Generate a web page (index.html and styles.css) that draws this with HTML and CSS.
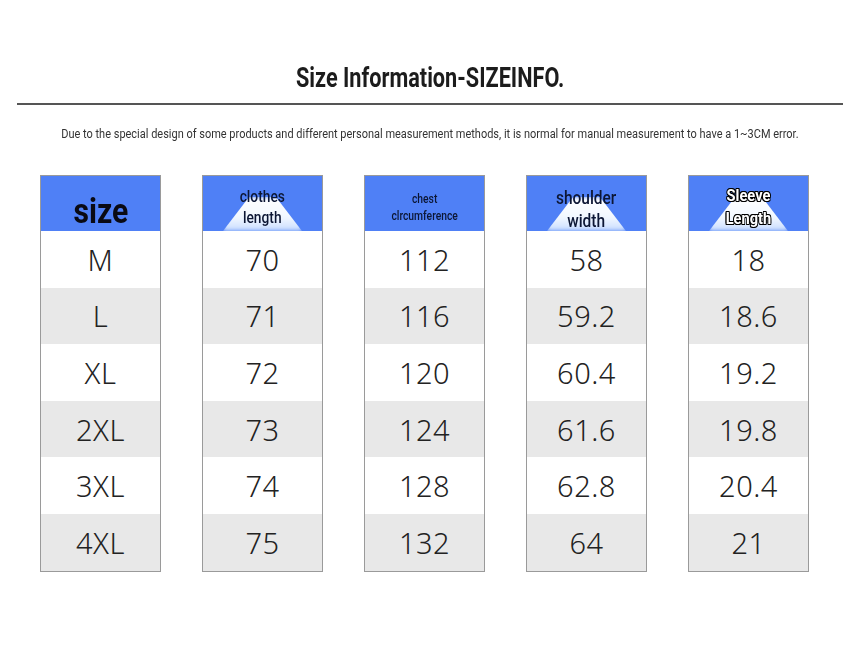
FILE: index.html
```html
<!DOCTYPE html>
<html>
<head>
<meta charset="utf-8">
<link rel="stylesheet" href="styles.css">
</head>
<body>
<div class="page">
  <h1 class="title"><span class="squeeze">Size Information-SIZEINFO.</span></h1>
  <div class="rule"></div>
  <p class="note"><span class="squeeze">Due to the special design of some products and different personal measurement methods, it is normal for manual measurement to have a 1~3CM error.</span></p>
  <div class="table">
    <div class="col">
      <div class="head head-size"><span>size</span></div>
      <div class="cell">M</div>
      <div class="cell alt">L</div>
      <div class="cell">XL</div>
      <div class="cell alt">2XL</div>
      <div class="cell">3XL</div>
      <div class="cell alt">4XL</div>
    </div>
    <div class="col">
      <div class="head glow head-clothes"><span>clothes<br>length</span></div>
      <div class="cell">70</div>
      <div class="cell alt">71</div>
      <div class="cell">72</div>
      <div class="cell alt">73</div>
      <div class="cell">74</div>
      <div class="cell alt">75</div>
    </div>
    <div class="col">
      <div class="head head-chest"><span>chest<br>clrcumference</span></div>
      <div class="cell">112</div>
      <div class="cell alt">116</div>
      <div class="cell">120</div>
      <div class="cell alt">124</div>
      <div class="cell">128</div>
      <div class="cell alt">132</div>
    </div>
    <div class="col">
      <div class="head glow head-shoulder"><span>shoulder<br>width</span></div>
      <div class="cell">58</div>
      <div class="cell alt">59.2</div>
      <div class="cell">60.4</div>
      <div class="cell alt">61.6</div>
      <div class="cell">62.8</div>
      <div class="cell alt">64</div>
    </div>
    <div class="col">
      <div class="head glow head-sleeve"><span>Sleeve<br>Length</span></div>
      <div class="cell">18</div>
      <div class="cell alt">18.6</div>
      <div class="cell">19.2</div>
      <div class="cell alt">19.8</div>
      <div class="cell">20.4</div>
      <div class="cell alt">21</div>
    </div>
  </div>
</div>
</body>
</html>
```
FILE: styles.css
```css
html, body {
  margin: 0;
  padding: 0;
  background: #ffffff;
}
.page {
  width: 860px;
  height: 645px;
  padding-top: 62px;
  box-sizing: border-box;
  font-family: "Roboto", "DejaVu Sans Condensed", sans-serif;
}
.squeeze {
  display: inline-block;
  white-space: nowrap;
}
.title {
  margin: 0;
  text-align: center;
  font-size: 27px;
  line-height: 32px;
  font-weight: bold;
  color: #1c1c1c;
}
.title .squeeze {
  transform: scaleX(0.803);
}
.rule {
  margin: 9px 17px 0 17px;
  height: 2px;
  background: #555555;
}
.note {
  margin: 21px 0 0 0;
  text-align: center;
  font-size: 12px;
  line-height: 16px;
  color: #333333;
}
.note .squeeze {
  transform: scaleX(0.915);
}
.table {
  display: flex;
  gap: 41px;
  padding-left: 40px;
  margin-top: 33px;
}
.col {
  width: 121px;
  box-sizing: border-box;
  border: 1px solid #9a9a9a;
  display: flex;
  flex-direction: column;
}
.head {
  position: relative;
  height: 55px;
  background: #4f80f6;
  display: flex;
  align-items: center;
  justify-content: center;
  text-align: center;
  overflow: hidden;
}
.head span {
  position: relative;
  z-index: 1;
  display: inline-block;
  transform: scaleX(0.86);
}
.head.glow::before {
  content: "";
  position: absolute;
  left: 20px;
  right: 20px;
  bottom: 0;
  height: 34px;
  background: linear-gradient(#ffffff, #f2f8ff 60%, #c8dcff);
  clip-path: polygon(33% 0, 67% 0, 100% 100%, 0 100%);
  filter: blur(2px);
}
.head-size {
  align-items: flex-end;
}
.head-size span {
  font-size: 35px;
  line-height: 38px;
  font-weight: bold;
  color: #0a0a14;
}
.head-clothes span {
  font-size: 16px;
  line-height: 21px;
  font-weight: 500;
  color: #0c1634;
  margin-top: 6px;
}
.head-chest span {
  font-size: 12px;
  line-height: 17px;
  font-weight: 500;
  color: #0c1634;
  margin-top: 8px;
}
.head-shoulder span {
  font-size: 18px;
  line-height: 23px;
  font-weight: 500;
  color: #0c1634;
  margin-top: 11px;
}
.head-sleeve span {
  font-size: 17px;
  line-height: 23px;
  color: #ffffff;
  font-weight: bold;
  text-shadow: 1px 0 0 #000, -1px 0 0 #000, 0 1px 0 #000, 0 -1px 0 #000, 1px 1px 0 #000, -1px -1px 0 #000, 1px -1px 0 #000, -1px 1px 0 #000;
  margin-top: 6px;
}
.cell {
  height: 56.6px;
  display: flex;
  align-items: center;
  justify-content: center;
  font-family: "Noto Sans", "Open Sans", sans-serif;
  font-size: 29px;
  font-weight: 300;
  letter-spacing: 0.5px;
  color: #222222;
}
.cell.alt {
  background: #e8e8e8;
}
```
